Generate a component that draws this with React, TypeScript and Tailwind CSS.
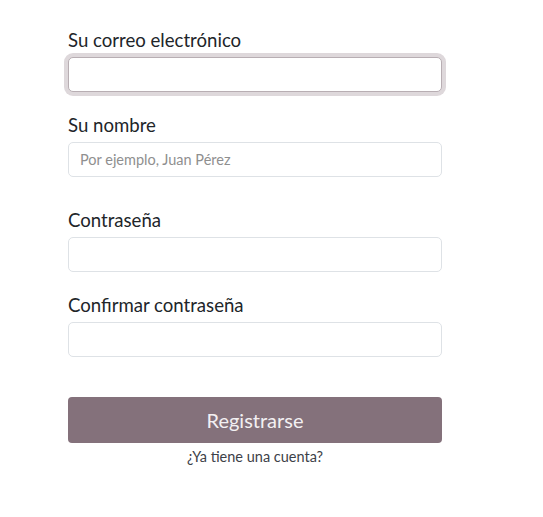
import React from 'react';

const font = { fontFamily: 'Lato, "Noto Sans", sans-serif' };

function Field({ label, type = 'text', placeholder, focused, className = '' }: { label: string; type?: string; placeholder?: string; focused?: boolean; className?: string }) {
  return (
    <div className={className}>
      <label className="block text-[18.6px] leading-[26px] text-[#212529] mb-[4px]">{label}</label>
      <input
        type={type}
        placeholder={placeholder}
        className={
          'block w-full h-[35px] rounded-[5px] bg-white px-[11px] text-[14.5px] text-[#212529] placeholder:text-[#8f8f8f] outline-none ' +
          (focused
            ? 'border border-[#b8aeb3] ring-4 ring-[#ded8db]'
            : 'border border-[#dee2e6]')
        }
      />
    </div>
  );
}

export default function App() {
  return (
    <div className="min-h-screen bg-white" style={font}>
      <form className="w-[374px] ml-[68px] pt-[27px]" onSubmit={(e) => e.preventDefault()}>
        <Field label="Su correo electrónico" type="email" focused />
        <Field label="Su nombre" placeholder="Por ejemplo, Juan Pérez" className="mt-[20px]" />
        <Field label="Contraseña" type="password" className="mt-[30px]" />
        <Field label="Confirmar contraseña" type="password" className="mt-[20px]" />
        <button
          type="submit"
          className="mt-[40px] w-full h-[46px] rounded-[4px] bg-[#84717b] text-[#f3f0f2] text-[20px]"
        >
          Registrarse
        </button>
        <div className="mt-[4px] text-center text-[14.5px] leading-[20px] text-[#3d4148]">¿Ya tiene una cuenta?</div>
      </form>
    </div>
  );
}
